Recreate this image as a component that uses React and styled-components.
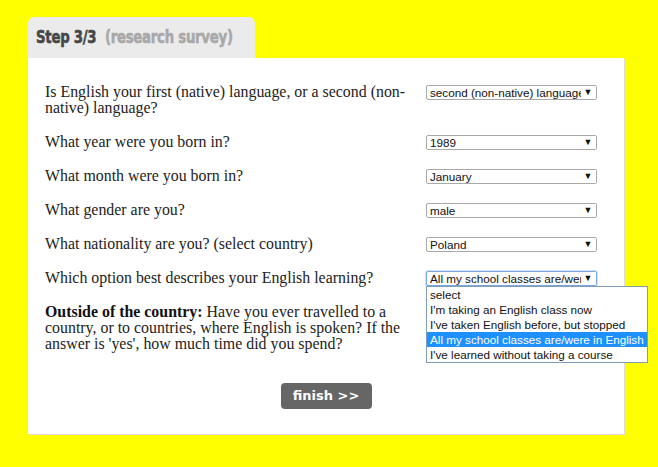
import React from "react";
import styled, { createGlobalStyle, css } from "styled-components";

const GlobalStyle = createGlobalStyle`
  html, body {
    margin: 0;
    padding: 0;
    background: #ffff00;
  }
  body {
    font-family: "Liberation Serif", Georgia, serif;
  }
`;

const Page = styled.div`
  width: 658px;
  height: 467px;
  padding: 17px 0 0 28px;
  box-sizing: border-box;
`;

const Tab = styled.div`
  display: flex;
  align-items: center;
  width: 227px;
  height: 41px;
  box-sizing: border-box;
  padding: 0 0 2px 8px;
  background: #ebebeb;
  border-radius: 6px 6px 0 0;
  overflow: hidden;
`;

const TabTitle = styled.div`
  white-space: nowrap;
  font-family: "DejaVu Sans", "Liberation Sans", sans-serif;
  font-weight: 700;
  font-size: 18.5px;
  letter-spacing: -0.4px;
  -webkit-text-stroke: 0.6px currentColor;
  transform: scaleX(0.72);
  transform-origin: left center;
`;

const TabStep = styled.span`
  color: #464646;
  margin-right: 12px;
`;

const TabNote = styled.span`
  color: #a8a8a8;
`;

const Card = styled.div`
  width: 596px;
  box-sizing: border-box;
  background: #fff;
  padding: 26px 0 25px 17px;
  box-shadow: 1px 1px 0 #dcdcdc;
`;

const Questions = styled.div`
  display: flex;
  flex-direction: column;
  gap: 18px;
`;

const Row = styled.div`
  position: relative;
  display: grid;
  grid-template-columns: 367px 171px;
  column-gap: 14px;
  align-items: start;
`;

const Label = styled.div`
  font-size: 15.9px;
  line-height: 16px;
  color: #222;

  b {
    font-weight: 700;
    color: #111;
  }
`;

const SelectBox = styled.div`
  position: relative;
  height: 15px;
  margin-top: 1px;
  box-sizing: border-box;
  border: 1px solid #a9a9a9;
  border-radius: 2px;
  background: #fff;
  font-family: "Liberation Sans", Arial, sans-serif;
  font-size: 11.7px;
  line-height: 13px;
  color: #111;
  padding: 0 14px 0 3px;
  white-space: nowrap;
  overflow: hidden;

  &::after {
    content: "▼";
    position: absolute;
    right: 0;
    top: 0;
    width: 14px;
    padding-right: 1px;
    text-align: center;
    background: #fff;
    font-size: 9px;
    color: #111;
  }

  ${(p) =>
    p.$open &&
    css`
      border-color: #7aa7e0;
      box-shadow: 0 0 0 1px #d4e3f7;
    `}
`;

const DropList = styled.ul`
  position: absolute;
  left: 381px;
  top: 16px;
  z-index: 2;
  margin: 0;
  padding: 0;
  list-style: none;
  width: 222px;
  box-sizing: border-box;
  border: 1px solid #7f9db9;
  background: #fff;
  font-family: "Liberation Sans", Arial, sans-serif;
  font-size: 11.7px;
  line-height: 15px;
  color: #111;
`;

const DropItem = styled.li`
  padding: 0 3px;
  white-space: nowrap;

  ${(p) =>
    p.$active &&
    css`
      background: #1e90ff;
      color: #fff;
    `}
`;

const Footer = styled.div`
  display: flex;
  justify-content: center;
  padding: 31px 17px 0 0;
`;

const FinishButton = styled.button`
  width: 91px;
  height: 26px;
  border: none;
  border-radius: 4px;
  background: #666;
  color: #fff;
  font-family: "DejaVu Sans", Verdana, sans-serif;
  font-weight: 700;
  font-size: 13px;
  padding: 0 0 2px;
  cursor: pointer;
`;

const questions = [
  {
    label: "Is English your first (native) language, or a second (non-native) language?",
    value: "second (non-native) language",
  },
  { label: "What year were you born in?", value: "1989" },
  { label: "What month were you born in?", value: "January" },
  { label: "What gender are you?", value: "male" },
  { label: "What nationality are you? (select country)", value: "Poland" },
];

const learningOptions = [
  "select",
  "I'm taking an English class now",
  "I've taken English before, but stopped",
  "All my school classes are/were in English",
  "I've learned without taking a course",
];

export default function App() {
  return (
    <>
      <GlobalStyle />
      <Page>
        <Tab>
          <TabTitle>
            <TabStep>Step 3/3</TabStep>
            <TabNote>(research survey)</TabNote>
          </TabTitle>
        </Tab>
        <Card>
          <Questions>
            {questions.map((q) => (
              <Row key={q.label}>
                <Label>{q.label}</Label>
                <SelectBox>{q.value}</SelectBox>
              </Row>
            ))}
            <Row>
              <Label>Which option best describes your English learning?</Label>
              <SelectBox $open>All my school classes are/were in English</SelectBox>
              <DropList>
                {learningOptions.map((o, i) => (
                  <DropItem key={o} $active={i === 3}>
                    {o}
                  </DropItem>
                ))}
              </DropList>
            </Row>
            <Row>
              <Label>
                <b>Outside of the country:</b> Have you ever travelled to a
                country, or to countries, where English is spoken? If the answer
                is 'yes', how much time did you spend?
              </Label>
            </Row>
          </Questions>
          <Footer>
            <FinishButton>finish &gt;&gt;</FinishButton>
          </Footer>
        </Card>
      </Page>
    </>
  );
}
